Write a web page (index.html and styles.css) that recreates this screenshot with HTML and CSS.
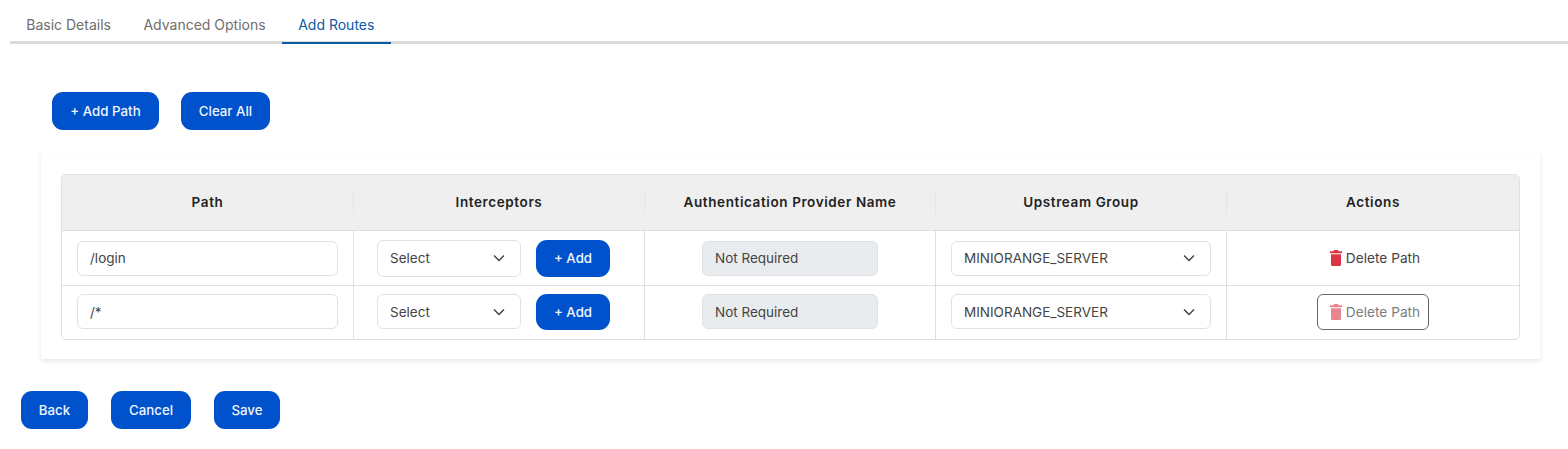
FILE: index.html
```html
<!DOCTYPE html>
<html lang="en">
<head>
<meta charset="utf-8">
<title>Add Routes</title>
<link rel="stylesheet" href="styles.css">
</head>
<body>
<nav class="tabs">
  <a class="tab">Basic Details</a>
  <a class="tab">Advanced Options</a>
  <a class="tab active">Add Routes</a>
</nav>
<div class="toolbar">
  <button class="btn add-path">+ Add Path</button>
  <button class="btn clear-all">Clear All</button>
</div>
<section class="card">
  <table class="routes">
    <thead>
      <tr>
        <th><div class="th-in">Path</div></th>
        <th><div class="th-in">Interceptors</div></th>
        <th><div class="th-in">Authentication Provider Name</div></th>
        <th><div class="th-in">Upstream Group</div></th>
        <th><div class="th-in last">Actions</div></th>
      </tr>
    </thead>
    <tbody>
      <tr>
        <td><div class="field path">/login</div></td>
        <td>
          <div class="icept">
            <div class="field select sm"><span>Select</span><svg class="chev" viewBox="0 0 12 8"><path d="M1 1.5 6 6.5 11 1.5"/></svg></div>
            <button class="btn add">+ Add</button>
          </div>
        </td>
        <td><div class="field disabled">Not Required</div></td>
        <td><div class="field select"><span>MINIORANGE_SERVER</span><svg class="chev" viewBox="0 0 12 8"><path d="M1 1.5 6 6.5 11 1.5"/></svg></div></td>
        <td>
          <button class="del">
            <svg class="trash" viewBox="0 0 12 16"><path d="M4 0h4l.6 1.2H12v2H0v-2h3.4zM1 4.2h10V14.4c0 .9-.7 1.6-1.6 1.6H2.6C1.700 16 1 15.300 1 14.400z"/></svg>
            Delete Path
          </button>
        </td>
      </tr>
      <tr>
        <td><div class="field path">/*</div></td>
        <td>
          <div class="icept">
            <div class="field select sm"><span>Select</span><svg class="chev" viewBox="0 0 12 8"><path d="M1 1.5 6 6.5 11 1.5"/></svg></div>
            <button class="btn add">+ Add</button>
          </div>
        </td>
        <td><div class="field disabled">Not Required</div></td>
        <td><div class="field select"><span>MINIORANGE_SERVER</span><svg class="chev" viewBox="0 0 12 8"><path d="M1 1.5 6 6.5 11 1.5"/></svg></div></td>
        <td>
          <button class="del focus">
            <svg class="trash" viewBox="0 0 12 16"><path d="M4 0h4l.6 1.2H12v2H0v-2h3.4zM1 4.2h10V14.4c0 .9-.7 1.6-1.6 1.6H2.6C1.700 16 1 15.300 1 14.400z"/></svg>
            Delete Path
          </button>
        </td>
      </tr>
    </tbody>
  </table>
</section>
<div class="footer">
  <button class="btn back">Back</button>
  <button class="btn cancel">Cancel</button>
  <button class="btn save">Save</button>
</div>
</body>
</html>
```
FILE: styles.css
```css
* { box-sizing: border-box; }
html, body { margin: 0; padding: 0; background: #fff; }
body { font-family: "Inter", "Liberation Sans", sans-serif; font-size: 13.500px; color: #444; height: 449px; overflow: hidden; }

.tabs { display: flex; margin-left: 10px; height: 44px; padding-top: 8px; border-bottom: 3px solid #dcdcdc; }
.tab { height: 36px; padding: 0 16.250px; line-height: 34px; font-size: 14px; color: #6e6e6e; }
.tab.active { color: #0b5aa5; border-bottom: 2px solid #0b5aa5; }

.btn { border: 0; background: #0052cc; color: #eef5ff; font: 500 13.300px "Inter", "Liberation Sans", sans-serif; height: 38px; border-radius: 11px; padding: 0; }
.add-path { width: 107px; }
.clear-all { width: 89px; }
.back { width: 67px; }
.cancel { width: 80px; }
.save { width: 66px; }

.toolbar { display: flex; gap: 22px; margin: 48px 0 0 52px; }

.card { margin: 23px 28px 0 41px; padding: 21px 20px 20px 20px; background: #fff; box-shadow: 0 2px 5px rgba(0,0,0,.1); height: 206px; }

.routes { width: 1459px; table-layout: fixed; border-collapse: separate; border-spacing: 0; border: 1px solid #dfdfdf; border-radius: 5px; }
.routes th { height: 56px; padding: 0 0 2px; background: #efefef; border-bottom: 1px solid #dfdfdf; font-weight: 600; font-size: 13.500px; letter-spacing: .6px; color: #222; }
.routes th:nth-child(1) { width: 292px; border-top-left-radius: 4px; }
.routes th:nth-child(2), .routes th:nth-child(3), .routes th:nth-child(4) { width: 291px; }
.routes th:last-child { border-top-right-radius: 4px; }
.th-in { height: 24px; line-height: 24px; border-right: 1px solid #e4e4e4; }
.th-in.last { border-right: 0; }
.routes td { height: 55px; padding: 0 15px; border-right: 1px solid #dfdfdf; border-bottom: 1px solid #dfdfdf; text-align: center; }
.routes td:last-child { border-right: 0; }
.routes tr:last-child td { border-bottom: 0; height: 53px; padding-bottom: 2px; }

.field { height: 35px; display: flex; align-items: center; justify-content: space-between; padding: 0 12px; border: 1px solid #dfe1e4; border-radius: 6px; background: #fff; color: #444; text-align: left; }
.chev { width: 12px; height: 8px; fill: none; stroke: #444; stroke-width: 1.500; margin-right: 3px; }
.icept { display: flex; align-items: center; gap: 15px; margin-left: 8px; }
.sm { width: 144px; height: 35px; }
tr:first-child .sm { height: 37px; }
.btn.add { width: 74px; height: 36px; padding: 0; }
tr:first-child .btn.add { height: 37px; }
.disabled { width: 176px; margin: 0 auto; background: #e9ecef; }

.del { display: inline-flex; align-items: center; justify-content: center; gap: 4px; width: 112px; height: 36px; padding: 0 0 0 4px; border: 1px solid transparent; border-radius: 6px; background: none; color: #444; font: 13.700px "Inter", "Liberation Sans", sans-serif; }
.trash { width: 12px; height: 16px; fill: #dc3545; }
.del.focus { border-color: #666; color: #7d7d7d; }
.del.focus .trash { opacity: .6; }

.footer { display: flex; margin: 32px 0 0 21px; gap: 23px; }
```
